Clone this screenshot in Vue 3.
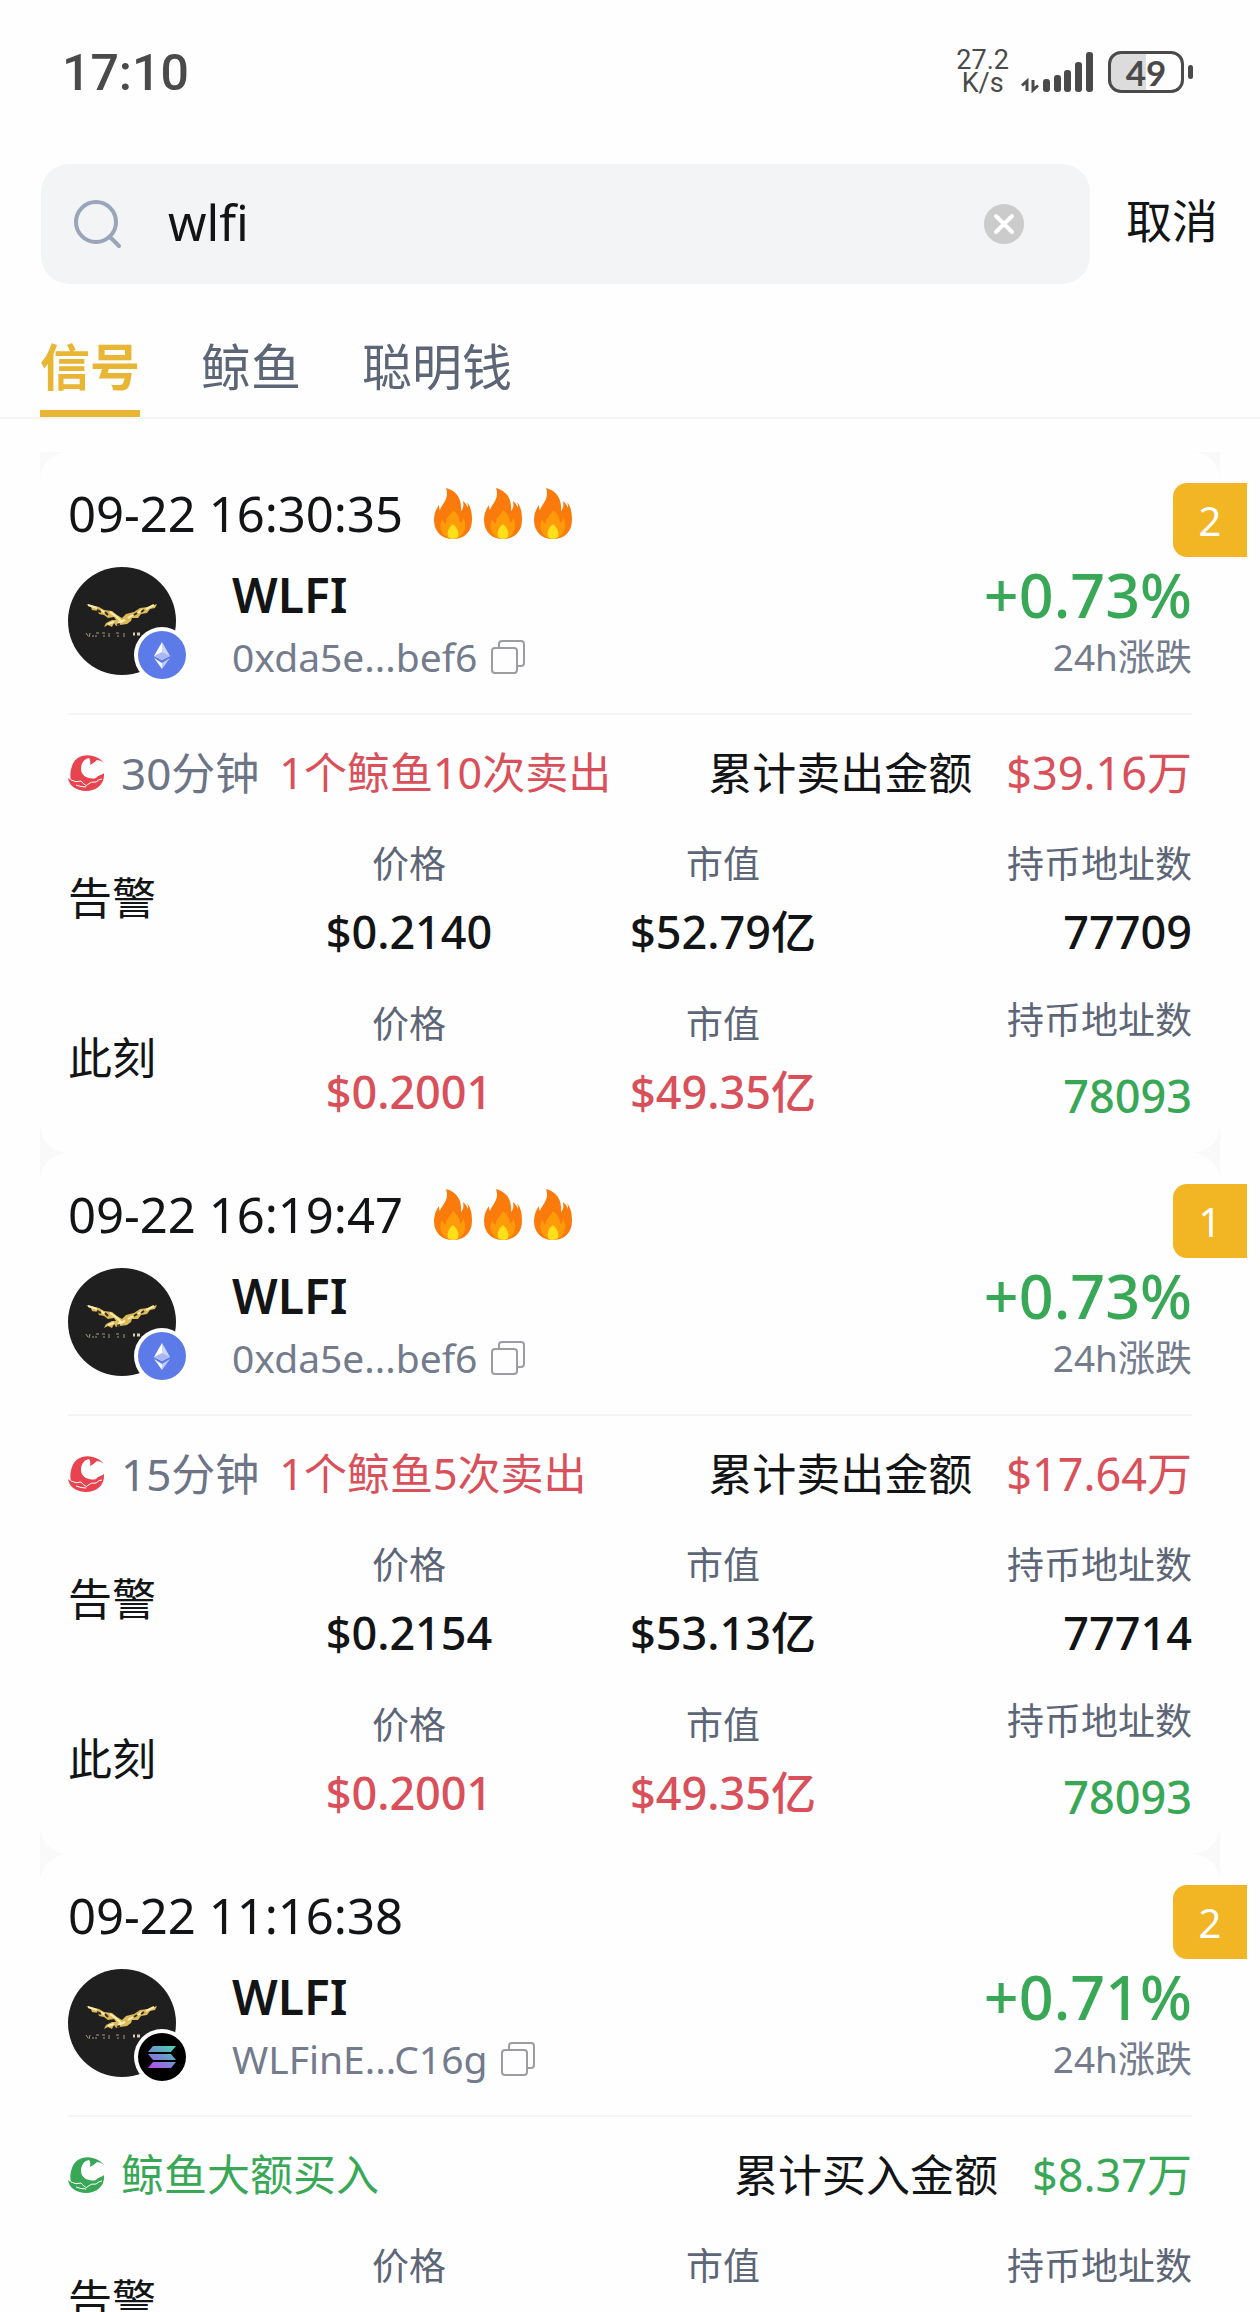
<script setup>
import { ref } from 'vue'

const query = ref('wlfi')
const activeTab = ref('信号')
const tabs = ['信号', '鲸鱼', '聪明钱']

const now = {
  label: '此刻',
  price: '$0.2001',
  cap: '$49.35亿',
  holders: '78093',
  current: true
}

const signals = [
  {
    time: '09-22 16:30:35',
    fires: 3,
    count: 2,
    chain: 'eth',
    address: '0xda5e...bef6',
    change: '+0.73%',
    side: 'sell',
    window: '30分钟',
    action: '1个鲸鱼10次卖出',
    totalLabel: '累计卖出金额',
    total: '$39.16万',
    rows: [{ label: '告警', price: '$0.2140', cap: '$52.79亿', holders: '77709' }, now]
  },
  {
    time: '09-22 16:19:47',
    fires: 3,
    count: 1,
    chain: 'eth',
    address: '0xda5e...bef6',
    change: '+0.73%',
    side: 'sell',
    window: '15分钟',
    action: '1个鲸鱼5次卖出',
    totalLabel: '累计卖出金额',
    total: '$17.64万',
    rows: [{ label: '告警', price: '$0.2154', cap: '$53.13亿', holders: '77714' }, now]
  },
  {
    time: '09-22 11:16:38',
    fires: 0,
    count: 2,
    chain: 'sol',
    address: 'WLFinE...C16g',
    change: '+0.71%',
    side: 'buy',
    window: '',
    action: '鲸鱼大额买入',
    totalLabel: '累计买入金额',
    total: '$8.37万',
    rows: [{ label: '告警', price: '', cap: '', holders: '' }]
  }
]
</script>

<template>
  <div class="screen">
    <header class="status">
      <time class="clock">17:10</time>
      <div class="indicators">
        <div class="speed"><span>27.2</span><span>K/s</span></div>
        <svg class="signal" width="72" height="42" viewBox="0 0 72 42" aria-hidden="true">
          <g fill="none" stroke="#4a4a4a" stroke-width="3">
            <path d="M6 40V30L1 34.500M12 29V39L17 34.500" />
          </g>
          <g fill="#4a4a4a">
            <rect x="22" y="28" width="7" height="13" rx="3" />
            <rect x="33" y="24" width="7" height="17" rx="3" />
            <rect x="43" y="19" width="7" height="22" rx="3" />
            <rect x="54" y="11" width="7" height="30" rx="3" />
            <rect x="65" y="1" width="7" height="40" rx="3" />
          </g>
        </svg>
        <div class="battery"><span>49</span></div>
      </div>
    </header>

    <form class="search" @submit.prevent>
      <div class="field">
        <svg class="lens" width="50" height="50" viewBox="0 0 50 50" fill="none" stroke="#9aa5b9" stroke-width="4" stroke-linecap="round" aria-hidden="true">
          <circle cx="23" cy="23" r="20" />
          <path d="M37 38L46 47" />
        </svg>
        <input v-model="query" type="text" aria-label="搜索" />
        <button class="clear" type="button" aria-label="清除" @click="query = ''">
          <svg width="40" height="40" viewBox="0 0 40 40" aria-hidden="true">
            <circle cx="20" cy="20" r="20" fill="#cbcbcb" />
            <path d="M12 12L28 28M28 12L12 28" stroke="#fff" stroke-width="4" stroke-linecap="round" />
          </svg>
        </button>
      </div>
      <button class="cancel" type="button">取消</button>
    </form>

    <nav class="tabs">
      <button
        v-for="tab in tabs"
        :key="tab"
        type="button"
        :class="['tab', { active: tab === activeTab }]"
        @click="activeTab = tab"
      >{{ tab }}</button>
    </nav>

    <main class="list">
      <article v-for="s in signals" :key="s.time" :class="['card', s.side]">
        <span class="count">{{ s.count }}</span>

        <div class="when">
          <time>{{ s.time }}</time>
          <div v-if="s.fires" class="fires">
            <svg v-for="n in s.fires" :key="n" width="50" height="60" viewBox="0 0 50 60" aria-hidden="true">
              <path fill="#fb7a0c" d="M18 5C29 8 34 16 33 28C35 26 36 23 35 18C38 20 39 23 40 25C40 23 40 21 39 19C43 24 44 30 44 37C44 49 36 56 25 56C14 56 6 49 6 37C6 31 8 26 11 22C11 24 11 26 12 27C13 22 22 16 18 5Z" />
              <path fill="#ff9a0a" d="M25 27C30 31 32 35 32 40C34 39 35 37 35 34C40 44 36 55 25 56C14 55 10 45 14 36C15 38 16 40 18 41C17 35 23 32 25 27Z" />
              <path fill="#ffe01b" d="M25 41C30 45 32 52 29 55Q25 57 21 55C18 51 20 45 25 41Z" />
            </svg>
          </div>
        </div>

        <div class="token">
          <div class="avatar">
            <svg width="108" height="108" viewBox="0 0 108 108" aria-hidden="true">
              <circle cx="54" cy="54" r="54" fill="#1f1f1f" />
              <path fill="#dcb95a" d="M18 37L31 40L36 43L44 44L49 48L54 51L58 47L66 45L72 41L80 40L89 37L87 41L82 42L79 46L73 47L70 51L64 51L63 54L59 57L52 58L48 59L46 56L44 60L40 58L36 60L38 56L44 53L48 53L46 50L40 51L36 48L31 47L30 44L24 43L23 40Z" />
              <path fill="none" stroke="#fbedae" stroke-width="2" d="M20 38L29 41M33 43L37 46M42 45L49 50L54 55M86 38L78 42M74 43L70 46M65 48L60 51M40 57L46 55M50 56L57 53" />
              <path fill="none" stroke="#3a2f1c" stroke-width="2" d="M29 43L33 45M37 45L40 48M66 48L69 46M73 45L76 43M49 58L52 57" />
              <path stroke="#a39a84" stroke-width="1" d="M18 66L20 69M22 66L21 70M25 68V70M28 66H31M28 68V70M34 66H37M35 69H37M41 66V70M48 66H51M50 68V70M56 66V70" />
              <path stroke="#d8cfb4" stroke-width="3" d="M65 67H67M69 67H72" />
            </svg>
            <svg class="chain" width="56" height="56" viewBox="0 0 56 56" aria-hidden="true">
              <circle cx="28" cy="28" r="28" fill="#fff" />
              <template v-if="s.chain === 'eth'">
                <circle cx="28" cy="28" r="24" fill="#5c7be8" />
                <path fill="#fff" d="M28 15L20 29L28 33Z" />
                <path fill="#cdd6fa" d="M28 15L36 29L28 33Z" />
                <path fill="#a9b8f4" d="M20 29L28 25L36 29L28 33Z" />
                <path fill="#f3f5ff" d="M20 31L28 36V42Z" />
                <path fill="#bfcbf8" d="M36 31L28 36V42Z" />
              </template>
              <template v-else>
                <defs>
                  <linearGradient id="sol" gradientUnits="userSpaceOnUse" x1="36" y1="16" x2="22" y2="40">
                    <stop offset="0" stop-color="#4bd0ae" />
                    <stop offset="0.5" stop-color="#6d94cd" />
                    <stop offset="1" stop-color="#b052e8" />
                  </linearGradient>
                </defs>
                <circle cx="28" cy="28" r="24" fill="#000" />
                <path fill="url(#sol)" d="M19 17H42L37 23H14ZM14 25H37L42 31H19ZM19 33H42L37 39H14Z" />
              </template>
            </svg>
          </div>
          <div class="identity">
            <h2>WLFI</h2>
            <div class="address">
              <span>{{ s.address }}</span>
              <button type="button" aria-label="复制地址">
                <svg width="34" height="34" viewBox="0 0 34 34" fill="none" stroke="#9b9da3" stroke-width="2" aria-hidden="true">
                  <rect x="1" y="8" width="25" height="25" rx="3" />
                  <path d="M8 8V4Q8 1 11 1H30Q33 1 33 4V23Q33 26 30 26H26" />
                </svg>
              </button>
            </div>
          </div>
          <div class="change">
            <strong>{{ s.change }}</strong>
            <span>24h涨跌</span>
          </div>
        </div>

        <div class="activity">
          <svg class="whale" width="38" height="38" viewBox="0 0 38 38" aria-hidden="true">
            <path fill="currentColor" d="M30 4C19 -2 7 2 4 12C2 18 2 22 3 26Q2 26 0 24C1 32 9 37 18 37C29 37 37 30 36 19C34 21 30 21 28 24C21 26 13 22 13 15C13 9 16 5 21 4Q23 6 22 11Q26 9 29 6Q33 6 36 9Q34 6 30 4Z" />
            <path fill="none" stroke="#fff" stroke-width="1" d="M3 26Q8 29 13 27Q15 30 19 32M19 31Q23 27 28 28Q31 25 34 25M8 31Q13 33 18 33" />
          </svg>
          <span v-if="s.window" class="window">{{ s.window }}</span>
          <span class="action">{{ s.action }}</span>
          <span class="total-label">{{ s.totalLabel }}</span>
          <span class="total">{{ s.total }}</span>
        </div>

        <div class="stats">
          <section v-for="r in s.rows" :key="r.label" :class="['row', { current: r.current }]">
            <h3>{{ r.label }}</h3>
            <dl>
              <dt>价格</dt>
              <dd>{{ r.price }}</dd>
            </dl>
            <dl>
              <dt>市值</dt>
              <dd>{{ r.cap }}</dd>
            </dl>
            <dl class="holders">
              <dt>持币地址数</dt>
              <dd>{{ r.holders }}</dd>
            </dl>
          </section>
        </div>
      </article>
    </main>
  </div>
</template>

<style>
body {
  margin: 0;
  background: #fefefe;
}
</style>

<style scoped>
.screen {
  height: 100vh;
  overflow: hidden;
  background: #fefefe;
  color: #131416;
  font-family: "Noto Sans", "Noto Sans CJK SC", sans-serif;
  font-size: 44px;
  line-height: 60px;
}

button {
  padding: 0;
  border: 0;
  background: none;
  color: inherit;
  font: inherit;
  cursor: pointer;
}

svg {
  display: block;
  flex: none;
}

h2,
h3,
dl,
dd {
  margin: 0;
}

.status {
  display: flex;
  align-items: center;
  justify-content: space-between;
  height: 144px;
  padding: 0 76px 0 62px;
  color: #4a4a4a;
  font-family: Roboto, sans-serif;
}

.clock {
  padding-top: 2px;
  font-size: 50px;
  font-weight: 500;
}

.indicators {
  display: flex;
  align-items: center;
}

.speed {
  display: flex;
  flex-direction: column;
  align-items: center;
  margin-right: 12px;
  font-size: 27px;
  line-height: 23px;
}

.battery {
  position: relative;
  box-sizing: border-box;
  width: 76px;
  height: 42px;
  margin-left: 15px;
  border: 3px solid #4a4a4a;
  border-radius: 13px;
  background: linear-gradient(to right, #dcdcdc 50%, #fefefe 50%);
  font-family: Lato, sans-serif;
  font-size: 35px;
  font-weight: 700;
  line-height: 36px;
  text-align: center;
}

.battery::after {
  content: "";
  position: absolute;
  top: 11px;
  right: -12px;
  width: 5px;
  height: 14px;
  border-radius: 3px;
  background: #4a4a4a;
}

.search {
  display: flex;
  align-items: center;
  gap: 36px;
  padding: 20px 42px 0 41px;
}

.field {
  display: flex;
  flex: 1;
  align-items: center;
  min-width: 0;
  height: 120px;
  padding: 0 66px 0 32px;
  box-sizing: border-box;
  border-radius: 28px;
  background: #f2f4f6;
}

.field input {
  flex: 1;
  min-width: 0;
  margin-left: 45px;
  padding: 0 0 4px;
  border: 0;
  outline: 0;
  background: none;
  color: inherit;
  font: inherit;
  font-size: 49px;
}

.cancel {
  padding-bottom: 8px;
  font-size: 46px;
}

.tabs {
  display: flex;
  gap: 61px;
  padding: 53px 40px 0;
  border-bottom: 2px solid #f5f5f5;
}

.tab {
  padding-bottom: 13px;
  border-bottom: 7px solid transparent;
  color: #5d6677;
  font-size: 50px;
}

.tab.active {
  border-color: #e9b535;
  color: #e9b535;
  font-weight: 700;
}

.list {
  margin: 33px 40px 0;
  background: #f9f9f9;
}

.card {
  position: relative;
  padding: 31px 28px 27px;
  border-radius: 28px;
  background: #fefefe;
}

.count {
  position: absolute;
  top: 31px;
  right: -27px;
  width: 74px;
  border-radius: 14px 0 0 14px;
  background: #f2b524;
  color: #fff;
  font-size: 40px;
  line-height: 76px;
  height: 74px;
  text-align: center;
}

.when {
  display: flex;
  gap: 25px;
  font-size: 49px;
}

.fires {
  display: flex;
}

.token {
  display: flex;
  align-items: flex-start;
  margin-top: 20px;
  padding-bottom: 26px;
  border-bottom: 2px solid #f5f5f6;
}

.avatar {
  position: relative;
  margin: 4px 56px 0 0;
}

.chain {
  position: absolute;
  right: -14px;
  bottom: -8px;
}

.identity {
  flex: 1;
}

h2 {
  font-size: 48px;
  font-weight: 600;
  line-height: 64px;
}

.address {
  display: flex;
  align-items: center;
  gap: 14px;
  color: #737b8c;
  font-size: 39px;
}

.change {
  display: flex;
  flex-direction: column;
  align-items: flex-end;
  color: #737b8c;
  font-size: 37px;
}

.change strong {
  color: #38a857;
  font-size: 61px;
  font-weight: 500;
  line-height: 64px;
}

.activity {
  display: flex;
  align-items: center;
  margin-top: 28px;
}

.action {
  font-size: 43px;
}

.total {
  margin-left: 34px;
  font-size: 45px;
}

.sell .whale {
  color: #e8444f;
}

.sell .action,
.sell .total {
  color: #d9505a;
}

.buy .whale,
.buy .action,
.buy .total {
  color: #38a857;
}

.whale {
  margin-right: 15px;
}

.window {
  margin-right: 20px;
  color: #6c7486;
}

.total-label {
  margin-left: auto;
}

.stats {
  display: grid;
  gap: 28px;
  margin-top: 31px;
}

.row {
  display: grid;
  grid-template-columns: 184fr 314fr 314fr 312fr;
  align-items: center;
}

h3 {
  font-size: 44px;
  font-weight: 400;
}

dl {
  display: grid;
  gap: 8px;
  text-align: center;
}

dt {
  color: #5d6677;
  font-size: 37px;
}

dd {
  min-height: 60px;
  font-size: 45px;
  font-weight: 500;
}

.holders {
  text-align: right;
}

.current dd {
  color: #d9505a;
}

.current .holders {
  gap: 16px;
}

.current .holders dd {
  color: #38a857;
}
</style>
